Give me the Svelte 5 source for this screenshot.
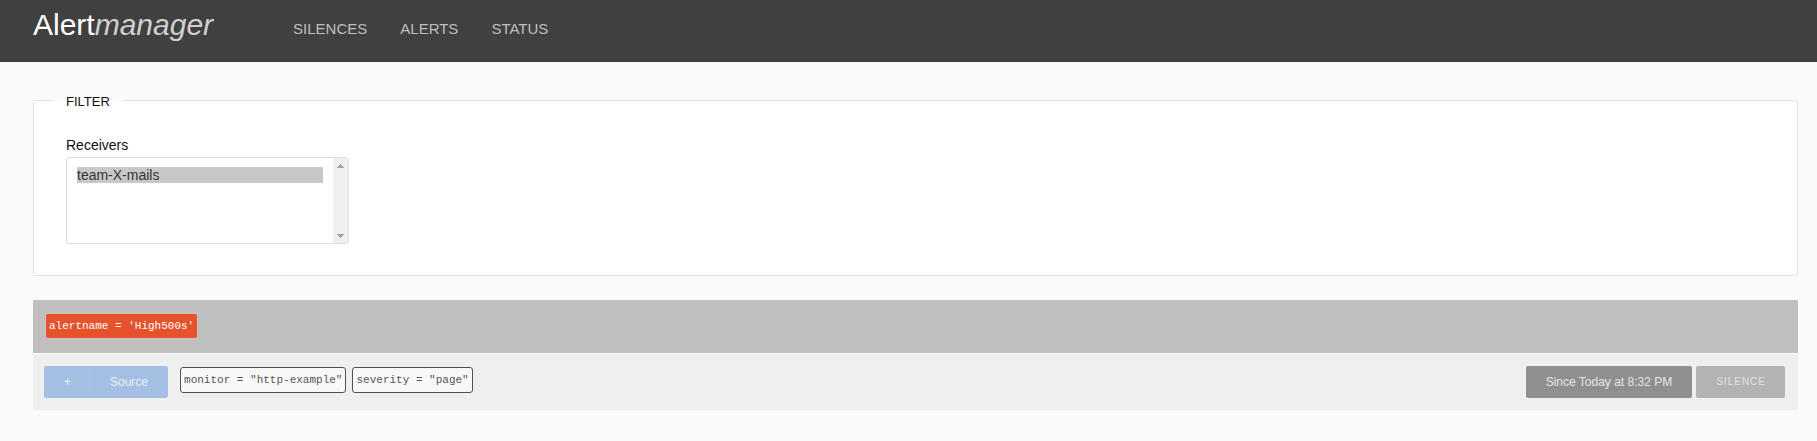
<script>
  const links = ['Silences', 'Alerts', 'Status'];
  const receivers = ['team-X-mails'];
  const labels = [
    { name: 'monitor', value: 'http-example' },
    { name: 'severity', value: 'page' }
  ];
  let selected = $state(['team-X-mails']);
</script>

<header>
  <a class="logo" href="#/">Alert<em>manager</em></a>
  <nav>
    {#each links as link}
      <a href="#/{link.toLowerCase()}">{link}</a>
    {/each}
  </nav>
</header>

<main>
  <fieldset>
    <legend>FILTER</legend>
    <label for="receivers">Receivers</label>
    <div class="listbox">
      <select id="receivers" multiple bind:value={selected}>
        {#each receivers as receiver}
          <option value={receiver}>{receiver}</option>
        {/each}
      </select>
      <div class="scrollbar" aria-hidden="true">
        <svg width="7" height="4" viewBox="0 0 7 4" shape-rendering="crispEdges"><path d="M3 0h1v1h1v1h1v1h1v1H0V3h1V2h1V1h1z" fill="#a3a3a3" /></svg>
        <svg width="7" height="4" viewBox="0 0 7 4" shape-rendering="crispEdges"><path d="M0 0h7v1H6v1H5v1H4v1H3V3H2V2H1V1H0z" fill="#a3a3a3" /></svg>
      </div>
    </div>
  </fieldset>

  <section>
    <div class="group-head">
      <span class="tag name">alertname = 'High500s'</span>
    </div>
    <div class="alert">
      <div class="actions">
        <button class="btn blue first" type="button">+</button>
        <a class="btn blue last" href="#/source">Source</a>
      </div>
      <div class="tags">
        {#each labels as label}
          <span class="tag">{label.name} = "{label.value}"</span>
        {/each}
      </div>
      <div class="right">
        <button class="btn since" type="button">Since Today at 8:32 PM</button>
        <button class="btn silence" type="button">SILENCE</button>
      </div>
    </div>
  </section>
</main>

<style>
  :global(body) {
    margin: 0;
    background: #fafafa;
    color: #111;
    font: 14px/20px "Liberation Sans", Arial, sans-serif;
  }
  header {
    display: flex;
    box-sizing: border-box;
    height: 62px;
    padding: 0 33px;
    background: #404040;
  }
  .logo {
    padding-top: 7px;
    color: #fff;
    font-size: 30px;
    line-height: 36px;
    text-decoration: none;
  }
  .logo em {
    color: #d0d0d0;
  }
  nav {
    display: flex;
    gap: 33px;
    margin-left: 80px;
    padding-top: 19px;
  }
  nav a {
    color: #bfbfbf;
    font-size: 15px;
    line-height: 20px;
    text-decoration: none;
    text-transform: uppercase;
  }
  main {
    padding: 30px 19px 32px 33px;
  }
  fieldset {
    min-width: 0;
    margin: 0 0 24px;
    padding: 26px 32px 31px;
    border: 1px solid #e0e0e0;
    border-radius: 3px;
    background: #fff;
  }
  legend {
    margin-left: -13px;
    padding: 3px 12px 0 13px;
    font-size: 13px;
    line-height: 14px;
  }
  label {
    display: block;
    margin-bottom: 2px;
  }
  .listbox {
    position: relative;
    width: 283px;
    max-width: 100%;
  }
  select {
    display: block;
    box-sizing: border-box;
    width: 100%;
    height: 87px;
    padding: 9px 25px 9px 10px;
    overflow-y: auto;
    scrollbar-width: none;
    border: 1px solid #dcdcdc;
    border-radius: 3px;
    outline: none;
    background: #fff;
    font: 14px/16px "Liberation Sans", Arial, sans-serif;
  }
  option {
    min-height: 16px;
    padding: 0;
    color: #333;
  }
  option:checked {
    background: #c8c8c8 linear-gradient(#c8c8c8, #c8c8c8);
    color: #333;
  }
  .scrollbar {
    position: absolute;
    top: 1px;
    right: 1px;
    bottom: 1px;
    display: flex;
    flex-direction: column;
    align-items: center;
    justify-content: space-between;
    box-sizing: border-box;
    width: 15px;
    padding: 6px 0 5px;
    background: #f0f0f0;
    pointer-events: none;
  }
  .group-head {
    display: flex;
    padding: 13px 12px 14px;
    border-bottom: 1px solid #fff;
    background: #bfbfbf;
    background-clip: padding-box;
  }
  .alert {
    display: flex;
    align-items: flex-start;
    padding: 12px 13px 12px 11px;
    background: #efefef;
  }
  .tag {
    box-sizing: border-box;
    height: 26px;
    padding: 0 3px;
    border: 1px solid #4f5154;
    border-radius: 3px;
    background: #f8f8f8;
    color: #555;
    font: 11px/24px "Liberation Mono", "Courier New", monospace;
    white-space: nowrap;
  }
  .tag.name {
    border-color: #cdc3c0;
    background: #e6522c;
    color: #fff;
  }
  .actions,
  .tags,
  .right {
    display: flex;
  }
  .tags {
    flex-wrap: wrap;
    gap: 6px;
    margin: 1px 12px 0;
  }
  .right {
    gap: 4px;
    margin-left: auto;
  }
  .btn {
    box-sizing: border-box;
    height: 32px;
    padding: 0 20px;
    border: 0;
    border-radius: 2px;
    color: #f0f0f0;
    font: 12px/32px "Liberation Sans", Arial, sans-serif;
    text-decoration: none;
    white-space: nowrap;
  }
  .blue {
    background: #a3bfe4;
  }
  .first {
    padding-right: 18px;
    border-radius: 2px 0 0 2px;
  }
  .last {
    border-left: 1px solid #a7c2e5;
    border-radius: 0 2px 2px 0;
  }
  .since {
    background: #8f8f8f;
    color: #e6e6e6;
  }
  .silence {
    padding-right: 19px;
    background: #b3b3b3;
    color: #e2e2e2;
    font-size: 10px;
    letter-spacing: 1px;
    line-height: 30px;
  }
</style>
